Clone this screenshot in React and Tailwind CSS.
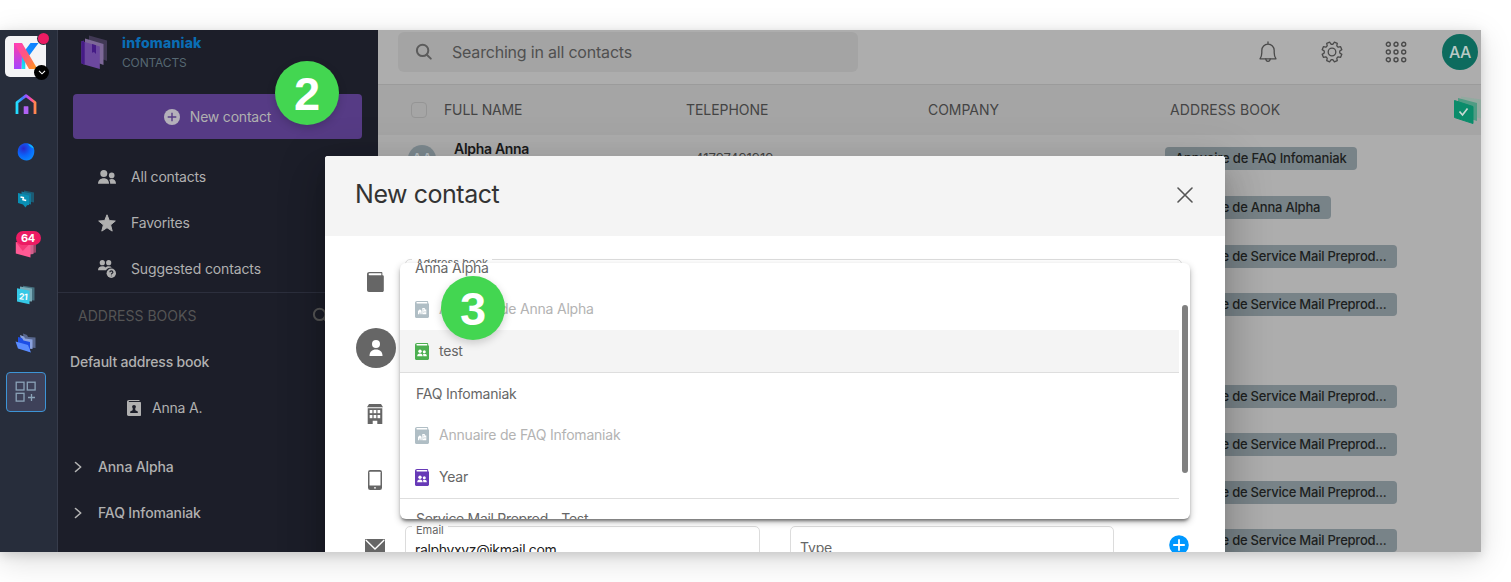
import React from "react";

/* ---------- icons ---------- */

function gearPath(cx, cy, outer, inner, teeth) {
  const pts = [];
  const step = (Math.PI * 2) / teeth;
  for (let i = 0; i < teeth; i++) {
    const mid = -Math.PI / 2 + step / 2 + i * step;
    [[-0.34, inner], [-0.2, outer], [0.2, outer], [0.34, inner]].forEach(([o, r]) => {
      const a = mid + o * step;
      pts.push((cx + r * Math.cos(a)).toFixed(2) + " " + (cy + r * Math.sin(a)).toFixed(2));
    });
  }
  return "M" + pts.join("L") + "Z";
}

const SearchIcon = ({ className }) => (
  <svg viewBox="0 0 18 18" className={className} fill="none" stroke="currentColor" strokeWidth="2" strokeLinecap="round">
    <circle cx="7.6" cy="7.4" r="5.7" />
    <path d="M11.8 11.8 15.8 15.6" />
  </svg>
);

const BellIcon = () => (
  <svg viewBox="0 0 20 22" className="h-[22px] w-5" fill="none" stroke="#4a4a4a" strokeWidth="1.3" strokeLinejoin="round" strokeLinecap="round">
    <path d="M10 1v2M2 17.8h16c-1.3-1.6-1.8-3-1.8-6V9.4C16.200 5.800 13.500 3.200 10 3.200S3.800 5.800 3.800 9.400v2.400c0 3-.5 4.400-1.800 6Z" />
    <path d="M7.800 18c.2 1.500 1 2.300 2.200 2.300s2-.8 2.200-2.300" />
  </svg>
);

const GearIcon = () => (
  <svg viewBox="0 0 22 22" className="size-[22px]" fill="none" stroke="#4a4a4a" strokeWidth="1.300" strokeLinejoin="round">
    <path d={gearPath(11, 11, 10.1, 7.8, 8)} />
    <circle cx="11" cy="11" r="3.800" />
  </svg>
);

const AppsIcon = () => (
  <svg viewBox="0 0 22 22" className="size-[22px]" fill="none" stroke="#4a4a4a" strokeWidth="1.400">
    {[3.3, 11, 18.7].map((y) => [3.3, 11, 18.7].map((x) => <circle key={x + "-" + y} cx={x} cy={y} r="2" />))}
  </svg>
);

const PeopleIcon = () => (
  <svg viewBox="0 0 18 14" className="h-3.5 w-[18px]" fill="currentColor">
    <circle cx="5.800" cy="3.600" r="3.500" />
    <path d="M0 13.800C0 10.300 2.500 8.200 5.800 8.200s5.200 2.100 5.200 5.600Z" />
    <circle cx="13.700" cy="5.400" r="2.800" />
    <path d="M12.200 13.800H18c0-3-1.700-4.700-4.300-4.700-1 0-1.800.2-2.500.7.700 1.100 1 2.400 1 4Z" />
  </svg>
);

const StarIcon = () => (
  <svg viewBox="0 0 18 18" className="size-[18px]" fill="currentColor" stroke="currentColor" strokeLinejoin="round">
    <path d="m9 .8 2.300 5.800 6 .4-4.700 3.900 1.600 6.200L9 13.700l-5.200 3.400 1.600-6.200L.7 7l6-.4Z" />
  </svg>
);

const SuggestIcon = () => (
  <svg viewBox="0 0 18 18" className="size-[18px]" fill="currentColor">
    <circle cx="4.300" cy="2.700" r="2.600" />
    <circle cx="10.700" cy="2.700" r="2.600" />
    <path d="M0 10.200C0 7.600 1.700 6.200 4.300 6.200c1.500 0 2.600.5 3.300 1.300C8.400 6.600 9.400 6.200 10.800 6.200c1.300 0 2.300.4 3 1.200-3 .1-5 1.100-5.800 2.800Z" />
    <circle cx="13.300" cy="13.300" r="4.700" />
    <path d="M11.800 12.300c0-2 3.100-1.900 3.100-.1 0 1.100-1.500 1.100-1.500 2.200M13.400 15.700v.5" fill="none" stroke="#1c1e29" strokeWidth="1.100" />
  </svg>
);

const PersonBook = () => (
  <svg viewBox="0 0 14 16" className="h-4 w-3.5" fill="currentColor">
    <path d="M2 0h10.500v1H2.200C1.500 1 1.500 1.900 2.200 1.900H13c.6 0 1 .4 1 1V15c0 .6-.4 1-1 1H1.500C.6 16 0 15.500 0 14.600V1.800C0 .7.800 0 2 0Z" />
    <circle cx="7" cy="6.800" r="1.900" fill="#1c1e29" />
    <path d="M5.900 8h2.200l.3 2.300 2.400 1.200V13H3.200v-1.500l2.400-1.200Z" fill="#1c1e29" />
  </svg>
);

const Chevron = () => (
  <svg viewBox="0 0 8 12" className="h-3 w-2" fill="none" stroke="#b4b4b4" strokeWidth="1.600" strokeLinecap="round" strokeLinejoin="round">
    <path d="m1.500 1.500 5.200 4.500-5.200 4.500" />
  </svg>
);

const BookIcon = () => (
  <svg viewBox="0 0 17 20" className="h-5 w-[17px]" fill="#666">
    <path d="M2.400 0h12c.6 0 1 .4 1 1v2.200c.9 0 1.400.5 1.400 1.200v14.100c0 .9-.6 1.500-1.500 1.500H2C.8 20 0 19.200 0 18V2.300C0 .9 1 0 2.400 0Z" />
    <path d="M2.600 1.200h11.700v2H2.600c-1.300 0-1.300-2 0-2Z" fill="#fff" />
  </svg>
);

const UserIcon = () => (
  <svg viewBox="0 0 14 16" className="h-4 w-3.5" fill="#fff">
    <circle cx="7" cy="4" r="4" />
    <path d="M.5 16c0-4.300 2.500-6.600 6.500-6.600s6.500 2.300 6.500 6.600Z" />
  </svg>
);

const BuildingIcon = () => (
  <svg viewBox="0 0 16 20" className="h-5 w-4" fill="#666">
    <path d="M2 0h12l2 3.200H0Z" />
    <path d="M.7 4.200h14.600V20h-5v-3.200H5.700V20h-5Z" />
    {[6, 11].map((y) => [2.7, 6.6, 10.5].map((x) => <rect key={x + "-" + y} x={x} y={y} width="2.700" height="3.200" fill="#fff" />))}
  </svg>
);

const PhoneIcon = () => (
  <svg viewBox="0 0 14 20" className="h-5 w-3.5">
    <rect width="14" height="20" rx="2.200" fill="#666" />
    <rect x="1.500" y="1.700" width="11" height="13.800" rx=".6" fill="#fff" />
    <circle cx="7" cy="17.800" r=".9" fill="#fff" />
  </svg>
);

const MailIcon = () => (
  <svg viewBox="0 0 20 15" className="h-[15px] w-5" fill="none">
    <rect width="20" height="15" rx=".8" fill="#666" />
    <path d="M.8.9 10 10 19.200.9" stroke="#fff" strokeWidth="1.400" />
  </svg>
);

const CloseIcon = () => (
  <svg viewBox="0 0 16 16" className="-mt-[3px] size-4" stroke="#555" strokeWidth="1.600" strokeLinecap="round">
    <path d="M1 1l14 14M15 1 1 15" />
  </svg>
);

function DirectoryIcon({ color, kind }) {
  return (
    <svg viewBox="0 0 14 17" className="h-[17px] w-3.5" fill={color}>
      <path d="M2 0h10.300c.5 0 .9.400.9.900v1.400c.5.100.8.500.8 1V15.600c0 .7-.6 1.400-1.300 1.400H1.500C.6 17 0 16.400 0 15.500V2C0 .8.800 0 2 0Z" />
      <path d="M2.200 1h10v1.600h-10c-1.100 0-1.100-1.600 0-1.600Z" fill="#fff" />
      {kind === "company" ? (
        <g fill="#fff">
          <path d="M3 13.200V9.900L4.900 8.200l1.700 1.500v3.500H5.400v-1.700h-1v1.700Z" />
          <path d="M7.300 7h2.500v1.400h1.500v4.800h-4Z" />
          <path d="M8.600 8.300v1M8.600 10.600v1.100M10 10v1.600" stroke={color} strokeWidth=".7" />
        </g>
      ) : (
        <g fill="#fff">
          <circle cx="5" cy="8.300" r="1.700" />
          <circle cx="9.300" cy="8.800" r="1.500" />
          <path d="M2.200 13.200c0-1.800 1.100-2.700 2.800-2.700s2.600.9 2.600 2.700ZM8.300 13.200h3.500c0-1.600-.9-2.400-2.400-2.400-.6 0-1 .1-1.400.4.300.5.300 1.200.3 2Z" />
        </g>
      )}
    </svg>
  );
}

/* ---------- application rail ---------- */

const KLogo = () => (
  <svg viewBox="0 0 26 26" className="h-[26px] w-[26px]">
    <defs>
      <linearGradient id="k1" x1="0" y1="0" x2="0" y2="1">
        <stop offset="0" stopColor="#ff3ba8" />
        <stop offset="1" stopColor="#a545ff" />
      </linearGradient>
      <linearGradient id="k2" x1="0" y1="0" x2="1" y2="1">
        <stop offset="0" stopColor="#ff3bc0" />
        <stop offset=".5" stopColor="#ff5a78" />
        <stop offset="1" stopColor="#ff9d12" />
      </linearGradient>
      <linearGradient id="k3" x1="1" y1="0" x2="0" y2="1">
        <stop offset="0" stopColor="#0a7bff" />
        <stop offset=".5" stopColor="#168fff" />
        <stop offset="1" stopColor="#1ef0e8" />
      </linearGradient>
    </defs>
    <path d="M17.500 0h8l-9.200 12.500-4 6.500V26H8.500V12Z" fill="url(#k3)" />
    <path d="M1 0h8v14L8.500 26H1Z" fill="url(#k1)" />
    <path d="M1 0h8l15.500 26H16Z" fill="url(#k2)" />
  </svg>
);

const HomeGlyph = () => (
  <svg viewBox="0 0 22 20" className="h-5 w-[22px]" fill="none">
    <defs>
      <linearGradient id="hm" x1="0" y1="1" x2="1" y2="1">
        <stop offset="0" stopColor="#22e0ff" />
        <stop offset=".3" stopColor="#3a7dff" />
        <stop offset=".55" stopColor="#b04dff" />
        <stop offset=".8" stopColor="#ff4f9a" />
        <stop offset="1" stopColor="#ff8a4a" />
      </linearGradient>
    </defs>
    <path d="M2 20V8.500L11 1.700l9 6.800V20" stroke="url(#hm)" strokeWidth="2.800" strokeLinejoin="round" />
    <rect x="8.700" y="12.200" width="4.700" height="7.800" rx=".5" fill="#b062f5" />
  </svg>
);

const SphereGlyph = () => (
  <svg viewBox="0 0 18 18" className="size-[18px]">
    <defs>
      <radialGradient id="sp" cx=".35" cy=".3" r=".8">
        <stop offset="0" stopColor="#2b26c8" />
        <stop offset=".5" stopColor="#0b62f8" />
        <stop offset="1" stopColor="#0a8cff" />
      </radialGradient>
    </defs>
    <path d="M6 .8c5-1.600 11 .8 11.300 6.500.3 5.500-2.800 10.400-7.800 10.300C4.500 17.500.6 14 .7 8.900.8 5 2.500 2 6 .8Z" fill="url(#sp)" />
    <path d="M11 1c2.700.6 5 2 5.800 4.500-1.800-.3-4-1.900-5.800-4.500Z" fill="#14c8f5" opacity=".8" />
  </svg>
);

const ChatGlyph = () => (
  <svg viewBox="0 0 18 18" className="size-[18px]">
    <path d="m7 .5 10 2v10l-10-2Z" fill="#1b5b74" />
    <path d="m4.500 1.500 9.500 2v11l-9.500-2Z" fill="#13789a" />
    <path d="m1 3 11 2.500V15l-2 .3L8.500 17.500l-2.500-3L1 13Z" fill="#0a8fb4" />
    <path d="M3.500 7 7 7.800M6.800 7.700 5.500 9.600M5.300 9.600l3.900.9" fill="none" stroke="#fff" strokeWidth="1.500" />
  </svg>
);

const MailGlyph = () => (
  <svg viewBox="0 0 22 20" className="h-5 w-[22px]">
    <path d="m8 3 13-1v12.500L12 16Z" fill="#9c4468" />
    <path d="m5 3 13.500-.5V16L10 17Z" fill="#d0608c" />
    <path d="M.8 4 15.500 5v14.500L.8 15.500Z" fill="#ff5a94" />
    <path d="m.8 4 7 9 7.700-8Z" fill="#f43a78" />
  </svg>
);

const CalendarGlyph = () => (
  <svg viewBox="0 0 20 20" className="size-5">
    <path d="m7 .7 11.500 1.700v13.200L7 15Z" fill="#45707f" />
    <path d="m4 1.500 12 2v13L4 16Z" fill="#79aab6" />
    <path d="m1 3.300 12.500 2.400v13.500L1 16.600Z" fill="#35c8e6" />
    <text x="3" y="14.600" fontSize="8.500" fontWeight="700" letterSpacing="-.4" fill="#fff" fontFamily="Inter, sans-serif" transform="rotate(5 7 12)">21</text>
  </svg>
);

const FilesGlyph = () => (
  <svg viewBox="0 0 21 20" className="h-5 w-[21px]">
    <path d="m8 .5 4 1.500 1 2 7.500.5V15L10 14Z" fill="#59688f" />
    <path d="m5 2 4 1.500 1 2 7.500 1V16L8 15Z" fill="#8ba2dd" />
    <path d="m3 4 4 1 1.500 2.500 6.500 1.500V19L3 14Z" fill="#1d4ee6" />
    <path d="M.5 8.500 13 12l3 7.500L3 15.500Z" fill="#5a8cff" />
  </svg>
);

const AppTilesGlyph = () => (
  <svg viewBox="0 0 22 22" className="size-[22px]" fill="none" stroke="#8ba3b8" strokeWidth="1.300">
    <rect x="1.200" y="1.200" width="7.800" height="7.800" />
    <rect x="12.300" y="1.200" width="7.800" height="7.800" />
    <rect x="1.200" y="12.300" width="7.800" height="7.800" />
    <path d="M16.500 13v7M13 16.500h7" />
  </svg>
);

function Rail() {
  const slot = "flex h-12 w-full items-center justify-center pr-1.5";
  return (
    <nav className="flex w-[58px] shrink-0 flex-col border-r border-[#373c4b] bg-[#272d3b] pt-0.5">
      <div className={slot}>
        <div className="relative flex size-[41px] items-center justify-center rounded-[5px] bg-[#f4f4f6]">
          <KLogo />
          <span className="absolute -top-[3px] -right-[3px] size-[11px] rounded-full bg-[#ec1c63] ring-1 ring-[#272d3b]" />
          <span className="absolute -right-[3px] -bottom-[3px] flex size-[15px] items-center justify-center rounded-full bg-black">
            <svg viewBox="0 0 8 5" className="h-[5px] w-2" fill="none" stroke="#fff" strokeWidth="1.100">
              <path d="m1 .8 3 3 3-3" />
            </svg>
          </span>
        </div>
      </div>
      <div className={slot}><HomeGlyph /></div>
      <div className={slot}><SphereGlyph /></div>
      <div className={slot + " pb-0.5"}><ChatGlyph /></div>
      <div className={slot}>
        <div className="relative">
          <MailGlyph />
          <span className="absolute -top-[7px] left-[1px] flex h-3.5 w-[25px] items-center justify-center rounded-full bg-[#ec1c63] text-[11px] font-bold tracking-[-0.3px] text-white">64</span>
        </div>
      </div>
      <div className={slot + " pb-0.5"}><CalendarGlyph /></div>
      <div className={slot + " pb-0.5"}><FilesGlyph /></div>
      <div className={slot}>
        <div className="flex size-10 items-center justify-center rounded border border-[#3d94d6] bg-[#3e4159]">
          <AppTilesGlyph />
        </div>
      </div>
    </nav>
  );
}

/* ---------- sidebar ---------- */

const NAV = [
  { label: "All contacts", icon: <PeopleIcon /> },
  { label: "Favorites", icon: <StarIcon /> },
  { label: "Suggested contacts", icon: <SuggestIcon />, tracking: "tracking-[-0.12px]" },
];

function Sidebar() {
  return (
    <aside className="flex w-80 shrink-0 flex-col bg-[#1c1e29] text-sm tracking-[-0.2px] text-[#b0b0b0]">
      <div className="flex h-16 gap-3.5 pt-1 pl-[22px]">
        <svg viewBox="0 0 28 36" className="h-9 w-7">
          <path d="m9 1.500 18 5V27L9 20Z" fill="#413955" />
          <path d="m5 4.500 18.500 5.500V31L5 24Z" fill="#7d6898" />
          <path d="M3.500 6 1.500 9v20l2.500 1V8Z" fill="#451b86" />
          <path d="m1.500 7 18.300 5.500V35L4 30.500l-2.500-1Z" fill="#6c489e" />
          <path d="m1.500 7 3.200 1v22.700l-3.200-1.200Z" fill="#451b86" />
          <path d="m12 10 4 1.300V20l-2-2-2 .8Z" fill="#451b86" />
        </svg>
        <div className="pt-px">
          <div className="text-sm leading-[16px] font-extrabold tracking-[0.2px] text-[#0a6db4]">infomaniak</div>
          <div className="pt-[3px] text-xs leading-[18px] tracking-[-0.15px] text-[#566872]">CONTACTS</div>
        </div>
      </div>
      <button className="mx-[15px] flex h-[45px] w-[289px] items-center justify-center gap-2.5 rounded bg-[#563b85]">
        <svg viewBox="0 0 16 16" className="size-4">
          <circle cx="8" cy="8" r="8" fill="#b4b0ba" />
          <path d="M8 3.700v8.600M3.700 8h8.600" stroke="#563b85" strokeWidth="1.400" />
        </svg>
        <span>New contact</span>
      </button>
      <div className="mt-[15px] border-b border-[#2c2f3d]">
        {NAV.map((n) => (
          <div key={n.label} className="flex h-[46px] items-center gap-[15px] pl-10">
            {n.icon}
            <span className={n.tracking}>{n.label}</span>
          </div>
        ))}
      </div>
      <div className="flex h-[46px] items-center justify-between pr-12 pl-5 tracking-[0.03px] text-[#555]">
        <span>ADDRESS BOOKS</span>
        <SearchIcon className="size-[18px]" />
      </div>
      <div className="flex h-[46px] items-center pb-px pl-3 font-medium tracking-[-0.18px]">Default address book</div>
      <div className="flex h-[46px] items-center gap-[11px] pl-[69px]">
        <PersonBook />
        <span>Anna A.</span>
      </div>
      <div className="mt-[13px]">
        {["Anna Alpha", "FAQ Infomaniak"].map((t) => (
          <div key={t} className="flex h-[46px] items-center gap-3.5 pl-4 font-medium tracking-[-0.13px]">
            <Chevron />
            <span className="pl-0.5">{t}</span>
          </div>
        ))}
      </div>
    </aside>
  );
}

/* ---------- contact table ---------- */

const PREPROD = "Annuaire de Service Mail Preprod...";
const ROWS = [
  { h: "h-[49px]", book: "Annuaire de FAQ Infomaniak", w: "w-48 tracking-[-0.15px]", name: "Alpha Anna", tel: "41797491919" },
  { h: "h-[49px]", book: "Annuaire de Anna Alpha", w: "w-[166px] tracking-[-0.21px]" },
  { h: "h-12", book: PREPROD, w: "w-[232px] tracking-[-0.23px]" },
  { h: "h-12", book: PREPROD, w: "w-[232px] tracking-[-0.23px]" },
  { h: "h-11" },
  { h: "h-12", book: PREPROD, w: "w-[232px] tracking-[-0.23px]" },
  { h: "h-12", book: PREPROD, w: "w-[232px] tracking-[-0.23px]" },
  { h: "h-12", book: PREPROD, w: "w-[232px] tracking-[-0.23px]" },
  { h: "h-12", book: PREPROD, w: "w-[232px] tracking-[-0.23px]" },
];

function Main() {
  const grid = "grid grid-cols-[308px_242px_242px_1fr]";
  return (
    <main className="flex min-w-0 flex-1 flex-col bg-[#adadad]">
      <header className="flex h-[55px] shrink-0 border-b border-[#9b9b9b] pt-0.5 pl-5">
        <div className="flex h-10 w-[460px] items-center gap-[19px] rounded-md bg-[#a4a4a4] pl-[17px] text-base tracking-[-0.2px] text-[#505050]">
          <SearchIcon className="size-[18px] text-[#5c5c5c]" />
          <span>Searching in all contacts</span>
        </div>
        <div className="ml-auto flex h-10 items-center pr-[3px]">
          <div className="flex w-16 justify-center"><BellIcon /></div>
          <div className="flex w-16 justify-center"><GearIcon /></div>
          <div className="flex w-16 justify-center"><AppsIcon /></div>
          <div className="ml-3.5 flex size-9 items-center justify-center rounded-full bg-[#0d6b5e] text-base font-medium tracking-[-0.5px] text-[#b9c9c6]">AA</div>
        </div>
      </header>
      <div className={grid + " h-[50px] shrink-0 items-center bg-[#a5a5a5] text-sm tracking-[-0.05px] text-[#444]"}>
        <div className="flex items-center gap-[17px] pl-[33px] tracking-[-0.15px]">
          <span className="size-4 rounded-sm border border-[#959595]" />
          FULL NAME
        </div>
        <span>TELEPHONE</span>
        <span>COMPANY</span>
        <div className="flex items-center justify-between">
          <span className="tracking-[0.1px]">ADDRESS BOOK</span>
          <svg viewBox="0 0 28 28" className="size-7">
            <path d="m8 .5 20 3v19L10 18Z" fill="#92aaa0" />
            <path d="m5 2 19 5v18L5 19Z" fill="#4f9c84" />
            <path d="m1.500 4.500 18.500 6v17L1.500 21.500Z" fill="#0b8c6b" stroke="#0b8c6b" strokeLinejoin="round" />
            <path d="m6.500 15.500 3 3.500 5-6.500" fill="none" stroke="#c8d8d2" strokeWidth="1.700" />
          </svg>
        </div>
      </div>
      {ROWS.map((r, i) => (
        <div key={i} className={grid + " shrink-0 items-start " + r.h}>
          <div className="flex gap-[18px] pl-[30px]">
            {r.name && (
              <>
                <span className="mt-2.5 flex size-7 items-center justify-center rounded-full bg-[#7d8a90] text-[15px] font-medium tracking-[-0.5px] text-[#b8bec1]">AA</span>
                <span className="pt-1 text-sm font-semibold tracking-[-0.3px] text-[#1a1a1a]">{r.name}</span>
              </>
            )}
          </div>
          <span className="pt-[14px] pl-[9px] text-[13px] text-[#444]">{r.tel}</span>
          <span />
          <div className="-ml-[5px] pt-3">
            {r.book && (
              <div className={"flex h-[23px] items-center rounded bg-[#788388] pl-2.5 text-[13px] font-medium whitespace-nowrap text-[#1d1f20] " + r.w}>{r.book}</div>
            )}
          </div>
        </div>
      ))}
    </main>
  );
}

/* ---------- new contact dialog ---------- */

function Option({ label, color, kind, muted, active }) {
  return (
    <div className={"flex h-[42px] items-center gap-2.5 pl-[15px] tracking-[-0.21px] " + (active ? "bg-[#f4f4f4] " : "") + (muted ? "text-[#b3b3b3]" : "text-[#666]")}>
      <DirectoryIcon color={color} kind={kind} />
      <span>{label}</span>
    </div>
  );
}

function Dropdown() {
  return (
    <div className="absolute top-[107px] left-[75px] flex h-64 w-[790px] overflow-hidden rounded-md bg-white text-sm tracking-[-0.2px] text-[#666] shadow-[0_3px_3px_-1px_rgba(0,0,0,0.4),0_3px_7px_0_rgba(0,0,0,0.28)]">
      <div className="-mt-4 w-[779px] shrink-0">
        <div className="border-b border-[#dedede]">
          <div className="flex h-[41px] items-center pl-[15px]">Anna Alpha</div>
          <Option label="Annuaire de Anna Alpha" color="#b0bec5" kind="company" muted />
          <Option label="test" color="#4caf50" active />
        </div>
        <div className="border-b border-[#dedede]">
          <div className="flex h-[41px] items-center pl-4">FAQ Infomaniak</div>
          <Option label="Annuaire de FAQ Infomaniak" color="#b0bec5" kind="company" muted />
          <Option label="Year" color="#673ab7" />
        </div>
        <div className="flex h-10 items-center pl-4 tracking-[-0.3px]">Service Mail Preprod - Test</div>
      </div>
      <div className="mt-[42px] ml-[3px] h-[168px] w-1.5 rounded-full bg-[#808080]" />
    </div>
  );
}

function Field({ label, value, placeholder, className }) {
  return (
    <div className={"relative h-14 rounded-[5px] border border-[#dcdcdc] text-sm tracking-[-0.35px] " + className}>
      {label && <span className="absolute -top-1 left-1.5 bg-white px-1 text-[11px] leading-[14px] tracking-normal whitespace-nowrap text-[#666]">{label}</span>}
      {value && <div className="pt-[13px] pl-[9px] text-[#222]">{value}</div>}
      {placeholder && <div className="pt-[11px] pl-[9px] tracking-[-0.2px] text-[#666]">{placeholder}</div>}
    </div>
  );
}

function Dialog() {
  const row = "flex h-[66px] items-start";
  const ico = "flex h-[66px] w-[50px] shrink-0 items-center justify-center";
  return (
    <section className="absolute top-[126px] left-[325px] w-[900px] rounded-t-[3px] bg-white shadow-[0_11px_15px_-7px_rgba(0,0,0,0.2),0_24px_38px_3px_rgba(0,0,0,0.14),0_9px_46px_8px_rgba(0,0,0,0.12)]">
      <div className="flex h-20 items-center justify-between rounded-t-[3px] bg-[#f4f4f4] pr-8 pl-[30px]">
        <h1 className="-mt-0.5 text-[25px] tracking-[-0.45px] text-[#333]">New contact</h1>
        <CloseIcon />
      </div>
      <div className="px-[25px] pt-[13px]">
        <div className={row}>
          <div className={ico}><BookIcon /></div>
          <Field label="Address book" className="mt-2.5 ml-[5px] w-[777px]" />
        </div>
        <div className={row}>
          <div className={ico + " pl-px"}>
            <div className="flex size-10 items-center justify-center rounded-full bg-[#666]"><UserIcon /></div>
          </div>
        </div>
        <div className={row}><div className={ico}><BuildingIcon /></div></div>
        <div className={row}><div className={ico}><PhoneIcon /></div></div>
        <div className={row}>
          <div className={ico}><MailIcon /></div>
          <Field label="Email" value="ralphyxyz@ikmail.com" className="mt-[13px] ml-[5px] w-[355px]" />
          <Field placeholder="Type" className="mt-[13px] ml-[30px] w-[324px]" />
          <svg viewBox="0 0 20 20" className="mt-[22px] ml-[55px] size-5">
            <circle cx="10" cy="10" r="9.800" fill="#0098ff" />
            <path d="M10 4.200v11.600M4.200 10h11.600" stroke="#fff" strokeWidth="1.800" />
          </svg>
        </div>
      </div>
      <Dropdown />
    </section>
  );
}

function StepBadge({ n, className }) {
  return (
    <div className={"absolute flex size-16 items-center justify-center rounded-full bg-[#43d651] font-['Liberation_Sans',sans-serif] text-[47px] leading-none font-bold text-white shadow-[0_3px_8px_rgba(0,0,0,0.18)] " + className}>
      {n}
    </div>
  );
}

export default function App() {
  return (
    <div className="h-[582px] w-[1511px] overflow-hidden bg-white pt-[30px] font-['Inter','Liberation_Sans',sans-serif]">
      <div className="w-[1481px] shadow-[0_8px_30px_rgba(0,0,0,0.15),0_3px_10px_rgba(0,0,0,0.13)]">
        <div className="relative flex h-[522px] overflow-hidden">
          <Rail />
          <Sidebar />
          <Main />
          <Dialog />
          <StepBadge n="2" className="top-[31px] left-[275px]" />
          <StepBadge n="3" className="top-[246px] left-[441px]" />
        </div>
      </div>
    </div>
  );
}
